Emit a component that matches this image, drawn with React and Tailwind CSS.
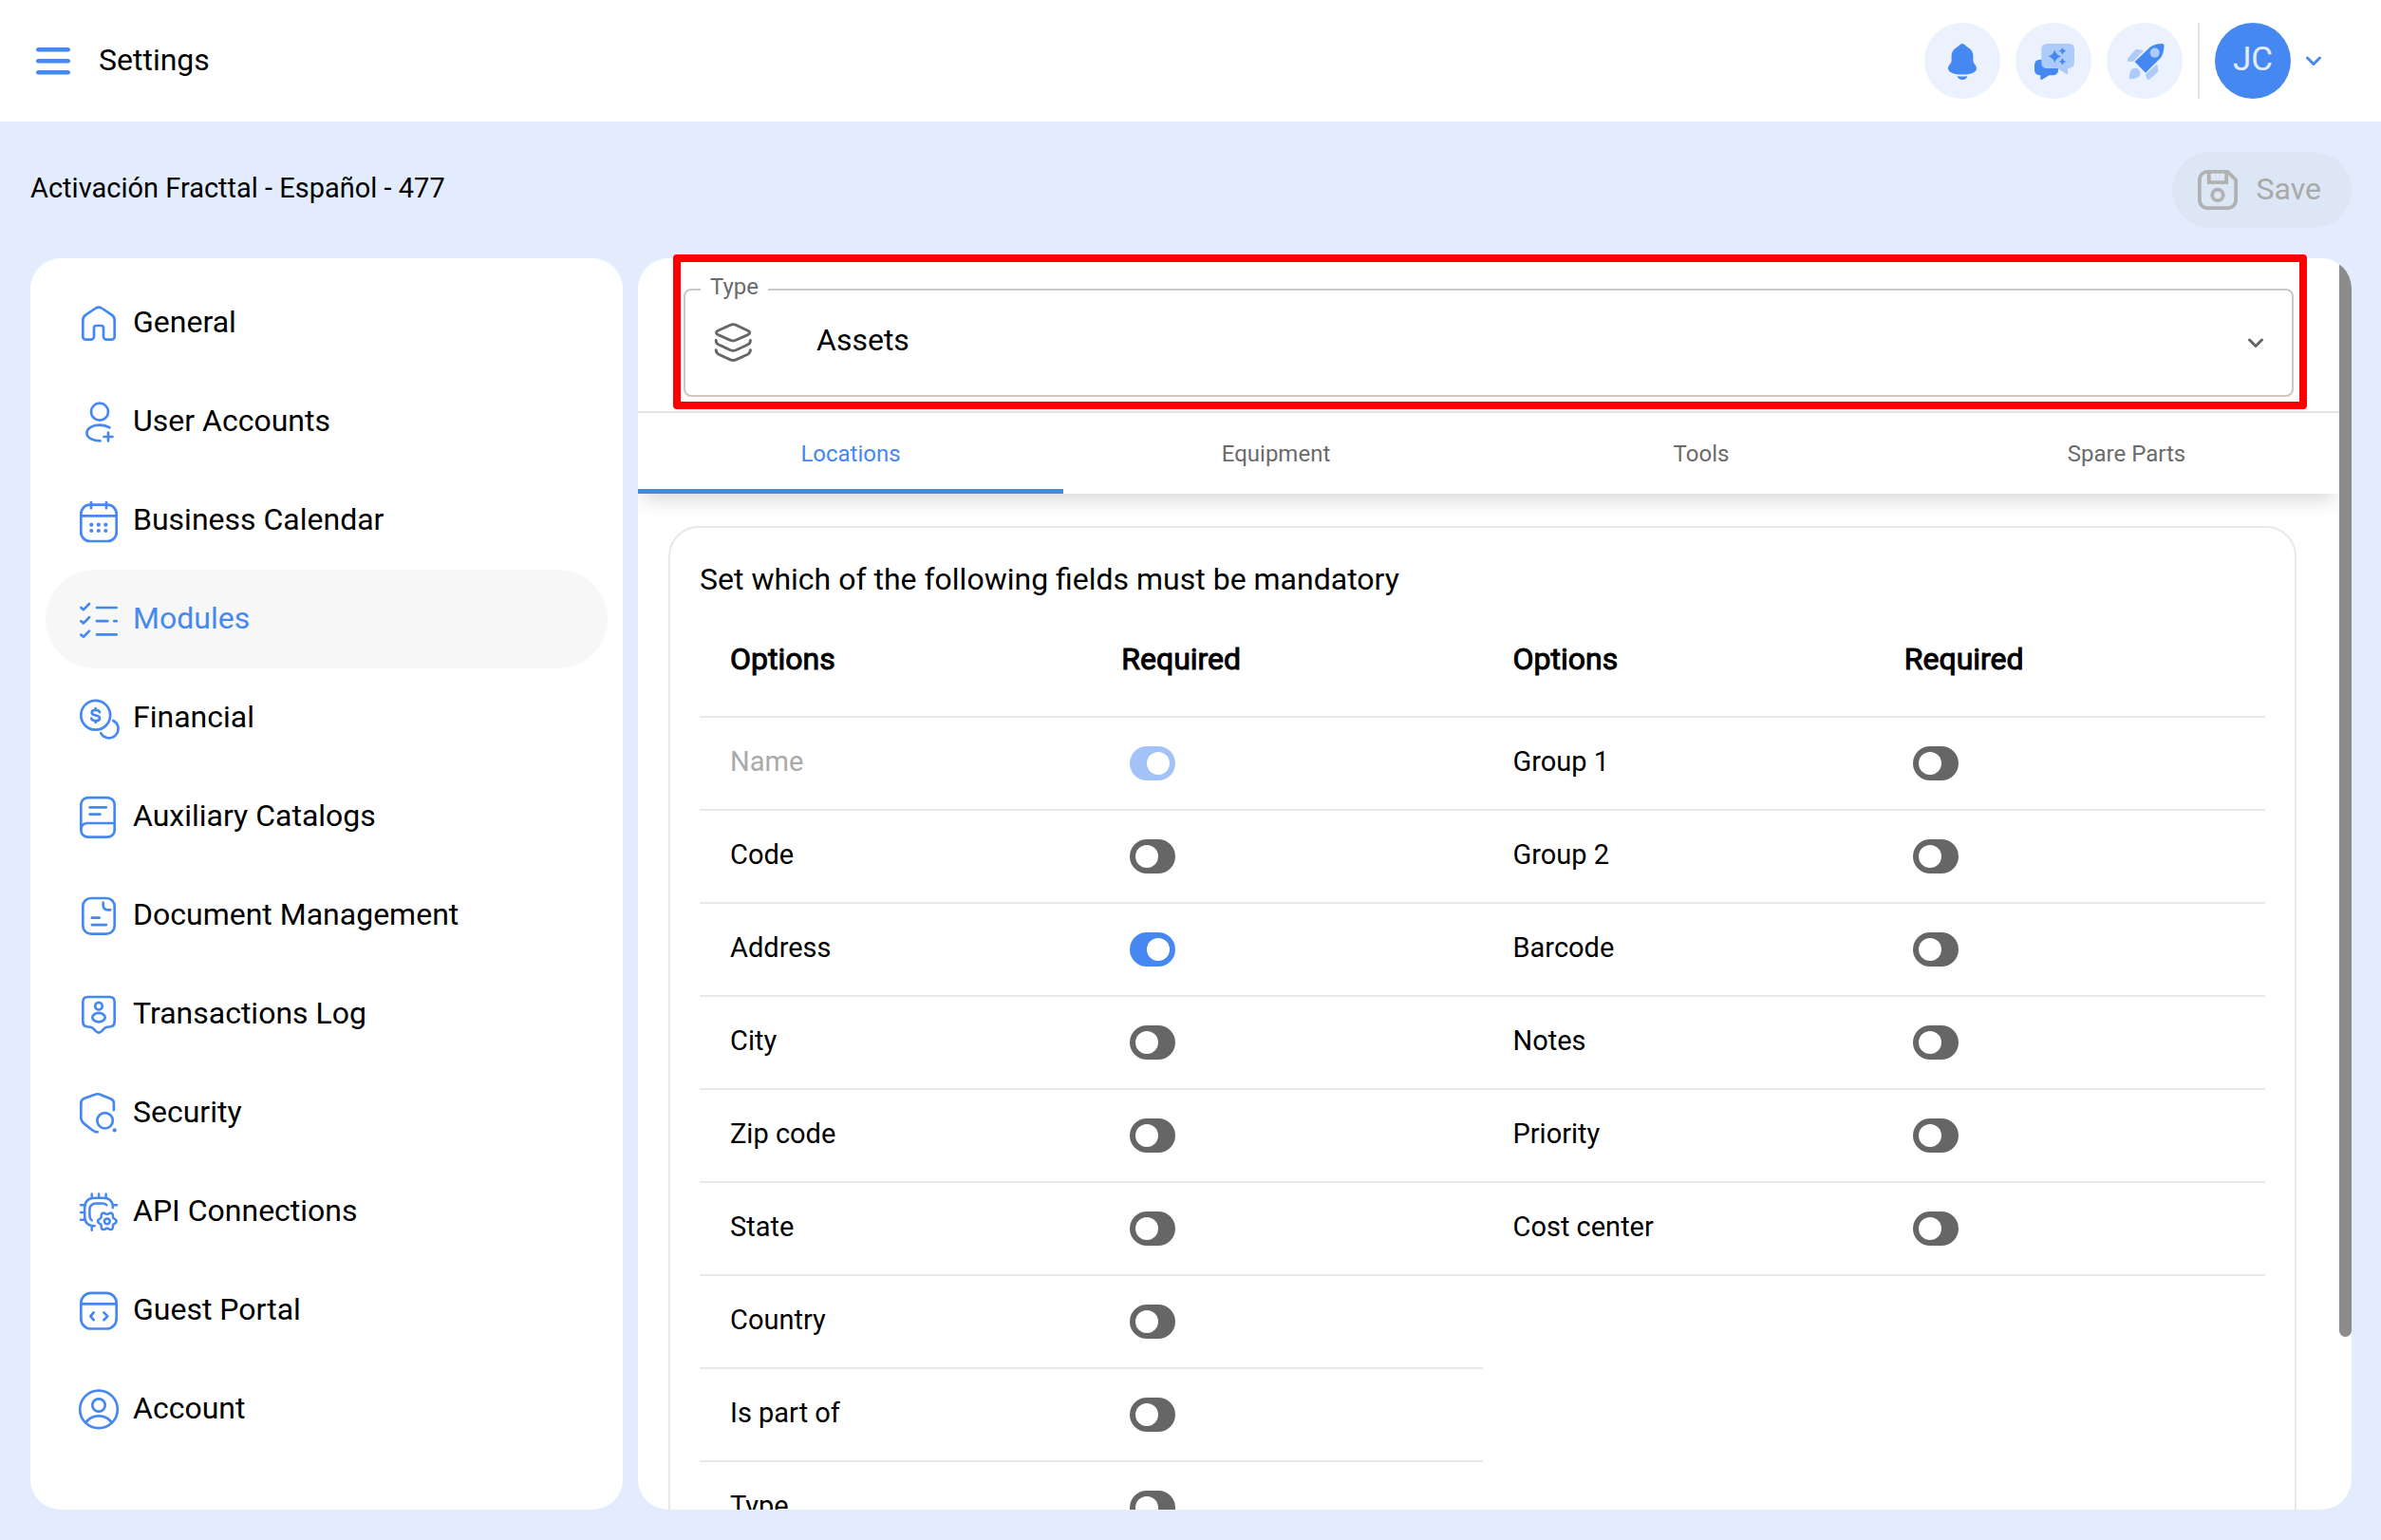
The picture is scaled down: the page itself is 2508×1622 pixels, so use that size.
import { useState } from "react";

const STROKE = {
  fill: "none",
  stroke: "currentColor",
  strokeWidth: 2.7,
  strokeLinecap: "round",
  strokeLinejoin: "round",
};

function gearPath(cx, cy, base, depth, teeth) {
  const steps = 96;
  const points = [];
  for (let i = 0; i < steps; i++) {
    const a = (i / steps) * Math.PI * 2;
    const r = base + depth * Math.cos(teeth * a);
    points.push(`${(cx + r * Math.cos(a)).toFixed(2)} ${(cy + r * Math.sin(a)).toFixed(2)}`);
  }
  return `M${points.join("L")}Z`;
}

const ICONS = {
  home: (
    <path d="M21 8.5 10.3 15.6Q7.3 17.7 7.3 21.2V38.4A3.3 3.3 0 0 0 10.6 41.7H15.7A3.3 3.3 0 0 0 19 38.4V29.3A2.3 2.3 0 0 1 21.3 27H26.7A2.3 2.3 0 0 1 29 29.3V38.4A3.3 3.3 0 0 0 32.3 41.7H37.4A3.3 3.3 0 0 0 40.7 38.4V21.2Q40.7 17.7 37.7 15.6L27 8.5Q24 6.6 21 8.5Z" />
  ),
  user: (
    <>
      <circle cx="25" cy="13.7" r="9" />
      <path d="M35.5 30.4C32 28.2 28 27.6 24.5 27.6 17 27.6 11.4 31.4 11.4 36.2 11.4 41 18 44.4 25.5 44.4M34 35.5V44.5M29.5 40H38.5" />
    </>
  ),
  calendar: (
    <>
      <rect x="5.3" y="7.7" width="37.4" height="38.3" rx="9.5" />
      <path d="M5.3 19.3H42.7M16 5V11.3M32 5V11.3" />
      <g fill="currentColor" stroke="none">
        <circle cx="16.3" cy="28.7" r="2.1" />
        <circle cx="23.8" cy="28.7" r="2.1" />
        <circle cx="31.3" cy="28.7" r="2.1" />
        <circle cx="16.3" cy="35" r="2.1" />
        <circle cx="23.8" cy="35" r="2.1" />
        <circle cx="31.3" cy="35" r="2.1" />
      </g>
    </>
  ),
  checklist: (
    <path d="M5.3 12 8 14.1 14 8M5.3 26.3 8 28.4 14 22.3M5.3 40.6 8 42.7 14 36.6M22 12H42.7M22 26.2H33.3M40.3 26.2H42.7M22 40.4H42.7" />
  ),
  coins: (
    <>
      <circle cx="20.7" cy="21.3" r="15.4" />
      <path d="M25 18.2C24.6 16.4 23 15.8 20.7 15.8 18.3 15.8 16.7 16.8 16.7 18.6 16.7 20.4 18 21.1 20.7 21.5 23.6 21.9 25 22.6 25 24.4 25 26.2 23.2 27.2 20.7 27.2 18.2 27.2 16.6 26.4 16.3 24.6M20.7 14V15.6M20.7 27.4V29" />
      <path d="M39.3 27A9.7 9.7 0 1 1 26.3 40.2" />
    </>
  ),
  book: (
    <>
      <rect x="5.3" y="4.1" width="35.4" height="41.6" rx="7.5" />
      <path d="M14.6 14.4H31.8M14.6 21.7H25.4M40.7 31H12Q5.3 31.3 5.3 38.3" />
    </>
  ),
  document: (
    <>
      <rect x="7.3" y="6" width="33.4" height="37.6" rx="8.5" />
      <path d="M28.7 10.6V13.3Q28.7 18.3 33.7 18.3H36.2M16.8 26.7H24.7M16.8 34.1H31.9" />
    </>
  ),
  badge: (
    <>
      <path d="M12.6 6H35.4Q40.7 6 40.7 11.3V32Q40.7 37.3 35.4 37.5C31.5 37.6 30.5 38.4 27.3 41.9Q24 45.2 20.7 41.9C17.5 38.4 16.5 37.6 12.6 37.5Q7.3 37.3 7.3 32V11.3Q7.3 6 12.6 6Z" />
      <circle cx="24" cy="15.7" r="3.8" />
      <ellipse cx="24" cy="27.6" rx="6.7" ry="4.7" />
    </>
  ),
  shield: (
    <>
      <path d="M39.9 21.2V14Q39.9 10.6 37 9.4L26 4.9Q22.7 3.6 19.4 4.9L9 8.7Q5.3 10.2 5.3 14V28.5Q5.3 33 8.8 35.6L16.5 41.7Q19.5 44.2 22.6 44.3" />
      <circle cx="30.6" cy="32.3" r="8.2" />
      <circle cx="40.7" cy="42.4" r="2.1" fill="currentColor" stroke="none" />
    </>
  ),
  chip: (
    <g strokeWidth="2.5">
      <path d="M38.8 20V17.5Q37.5 9.8 29 9.7H20Q9.2 9.7 9.2 20.5V29Q9.2 39.2 19.7 39.3" />
      <path d="M32.4 17.3Q31 15.4 27.5 15.4H22Q14.4 15.4 14.4 22.5V28Q14.4 31.5 16.7 33.3" />
      <path d="M16.7 5.5V9.7M24.1 5.5V9.7M31.6 5.5V9.7M5 17.3H9M5 25.1H9M5 32.7H9M39 17.3H43M16.7 39.3V43.7" />
      <path d={gearPath(32.8, 34.3, 8.6, 1.2, 6)} />
      <circle cx="32.8" cy="34.3" r="2.9" />
    </g>
  ),
  code: (
    <>
      <rect x="5.3" y="5.9" width="37.4" height="37.6" rx="10.5" />
      <path d="M5.3 17.4H42.7M18.6 26.4 15.3 30.4 18.6 34.2M29.4 26.4 33.3 30.4 29.4 34.2" />
    </>
  ),
  account: (
    <>
      <circle cx="24" cy="24.4" r="19.8" />
      <circle cx="24" cy="20" r="6.7" />
      <path d="M11 37.6C14 33.4 18.5 31.4 24 31.4S34 33.4 37 37.6" />
    </>
  ),
};

const MENU = [
  ["General", "home"],
  ["User Accounts", "user"],
  ["Business Calendar", "calendar"],
  ["Modules", "checklist"],
  ["Financial", "coins"],
  ["Auxiliary Catalogs", "book"],
  ["Document Management", "document"],
  ["Transactions Log", "badge"],
  ["Security", "shield"],
  ["API Connections", "chip"],
  ["Guest Portal", "code"],
  ["Account", "account"],
];

const TABS = ["Locations", "Equipment", "Tools", "Spare Parts"];

const LEFT_FIELDS = [
  { name: "Name", on: true, locked: true },
  { name: "Code" },
  { name: "Address", on: true },
  { name: "City" },
  { name: "Zip code" },
  { name: "State" },
  { name: "Country" },
  { name: "Is part of" },
  { name: "Type" },
];

const RIGHT_FIELDS = [
  { name: "Group 1" },
  { name: "Group 2" },
  { name: "Barcode" },
  { name: "Notes" },
  { name: "Priority" },
  { name: "Cost center" },
];

function Chevron({ className }) {
  return (
    <svg viewBox="0 0 24 24" className={className} {...STROKE} strokeWidth="3" aria-hidden="true">
      <path d="M5.5 9 12 15.5 18.5 9" />
    </svg>
  );
}

function RoundButton({ label, children }) {
  return (
    <button type="button" aria-label={label} className="size-20 rounded-full bg-[#ebf2fe] text-[#4688f1]">
      <svg viewBox="0 0 80 80" className="size-20" fill="currentColor" aria-hidden="true">
        {children}
      </svg>
    </button>
  );
}

function TopBar() {
  return (
    <header className="flex h-32 shrink-0 items-center bg-white pl-8 pr-[59px]">
      <button type="button" aria-label="Menu" className="text-[#4688f1]">
        <svg viewBox="0 0 48 48" className="size-12" fill="currentColor" aria-hidden="true">
          <rect x="6" y="10" width="36" height="4.6" rx="2.3" />
          <rect x="6" y="22" width="36" height="4.6" rx="2.3" />
          <rect x="6" y="34" width="36" height="4.6" rx="2.3" />
        </svg>
      </button>
      <h1 className="ml-6 pb-0.5 text-[32px] leading-10">Settings</h1>
      <div className="ml-auto flex items-center gap-4">
        <RoundButton label="Notifications">
          <path d="M40 22C37.4 22 36.6 24.4 34 26 30.4 28 28.6 31 28.6 35V39.5C28.6 43.2 25 44.6 25 48 25 52.4 32 54.6 40 54.6S55 52.4 55 48C55 44.6 51.4 43.2 51.4 39.5V35C51.4 31 49.6 28 46 26 43.4 24.4 42.6 22 40 22Z" />
          <path d="M34.6 56.2Q40 57 45.4 56.2 44 60 40 60T34.6 56.2Z" />
        </RoundButton>
        <RoundButton label="Assistant">
          <path d="M27 38.7H26Q20 38.7 20 44.7V49.3Q20 54.6 25 55.2H26.3V59Q26.3 60.6 28 59.7L35.5 55.3H39.5Q45 55 45 50V46L36 40Z" />
          <path
            className="text-[#accafa]"
            d="M33.3 22H56Q62 22 62 28V42Q62 47.4 55.2 48V52.8Q55.2 54.6 53.4 53.7L44 48H33.3Q27.3 48 27.3 42V28Q27.3 22 33.3 22Z"
          />
          <path d="M41.3 28.2Q42.6 34 48.4 35.3 42.6 36.6 41.3 42.4 40 36.6 34.2 35.3 40 34 41.3 28.2Z" />
          <path d="M49.4 26Q50.2 29 53.2 29.7 50.2 30.5 49.4 33.4 48.6 30.5 45.8 29.7 48.6 29 49.4 26Z" />
          <path d="M49.4 37.2Q50.2 40 53.2 40.8 50.2 41.6 49.4 44.6 48.6 41.6 45.8 40.8 48.6 40 49.4 37.2Z" />
        </RoundButton>
        <RoundButton label="What's new">
          <g className="text-[#accafa]">
            <path d="M22.2 37.4 30.2 28.6Q31 27.7 32.5 27.9L38.8 29.2 28.5 40.4 23.6 41Q21.2 40.6 22.2 37.4Z" />
            <path d="M53.2 43.6 54.3 50Q54.3 51.6 53.4 52.4L45.4 59.6Q43.4 60.6 42 58.8L41 54Z" />
            <path d="M30 47.8C33 47.8 35.4 50 35.4 53 35.4 57.5 31 59 25 59.2 23.8 59.2 23.6 58.4 23.8 57 24.4 51.5 26 47.8 30 47.8Z" />
          </g>
          <path d="M29.6 41 45.4 26Q50.5 22 58 22 60.6 22 60.5 24.4 60.4 32 56.6 37.3L41 52.8Z" />
          <circle cx="50.7" cy="31.6" r="5" className="text-[#accafa]" />
        </RoundButton>
        <div className="h-20 w-0.5 bg-[#e6e6e6]" />
        <button type="button" className="flex items-center gap-3 text-[#4688f1]">
          <span className="flex size-20 items-center justify-center rounded-full bg-[#4688f1] pb-0.5 text-[35px] text-[#e3ecfd]">
            JC
          </span>
          <Chevron className="size-6" />
        </button>
      </div>
    </header>
  );
}

function Sidebar() {
  return (
    <nav className="w-[624px] shrink-0 rounded-[32px] bg-white p-4">
      {MENU.map(([label, icon]) => (
        <button
          key={label}
          type="button"
          aria-current={label === "Modules" ? "page" : undefined}
          className="flex h-[104px] w-full items-center gap-3 rounded-full px-8 text-left text-[32px] leading-10 aria-[current=page]:bg-[#f7f7f7] aria-[current=page]:text-[#4688f1]"
        >
          <svg viewBox="0 0 48 48" className="size-12 text-[#4688f1]" {...STROKE} aria-hidden="true">
            {ICONS[icon]}
          </svg>
          <span className="pb-0.5">{label}</span>
        </button>
      ))}
    </nav>
  );
}

function Toggle({ label, on, locked }) {
  const [checked, setChecked] = useState(Boolean(on));
  return (
    <input
      type="checkbox"
      role="switch"
      aria-label={label}
      checked={checked}
      disabled={locked}
      onChange={(e) => setChecked(e.target.checked)}
      className="ml-[9px] flex h-9 w-12 appearance-none items-center rounded-full bg-[#666] px-1.5 before:size-6 before:rounded-full before:bg-white checked:justify-end checked:bg-[#4688f1] disabled:bg-[#a3c3f8]"
    />
  );
}

function FieldTable({ fields }) {
  return (
    <table className="w-full table-fixed self-start text-left">
      <thead>
        <tr className="h-[121px] border-b-2 border-[#e8e8e8] text-[32px] [-webkit-text-stroke:1px_black]">
          <th className="pl-8 font-normal">Options</th>
          <th className="pl-8 font-normal">Required</th>
        </tr>
      </thead>
      <tbody>
        {fields.map((f) => (
          <tr key={f.name} className="h-[98px] border-b-2 border-[#e8e8e8] text-[29px]">
            <td className="pb-0.5 pl-8">
              <span className={f.locked ? "text-[#aaa]" : ""}>{f.name}</span>
            </td>
            <td className="pl-8">
              <Toggle label={f.name} on={f.on} locked={f.locked} />
            </td>
          </tr>
        ))}
      </tbody>
    </table>
  );
}

function TypeField() {
  return (
    <div className="px-12 pb-[15px] pt-[18px]">
      <fieldset className="rounded-lg border-2 border-[#c8c8c8] pb-3.5">
        <legend className="ml-4 px-2.5 pb-1.5 text-[24px] leading-6 text-[#6b6b6b]">
          <label htmlFor="type" className="block">
            Type
          </label>
        </legend>
        <div className="flex h-[82px] items-center px-[26px]">
          <svg viewBox="0 0 48 48" className="size-12 shrink-0 text-[#666]" {...STROKE} strokeWidth="2.9" aria-hidden="true">
            <path d="M21.6 5.2 8.3 11.2Q4.6 13.4 8.3 15.6L21.4 21.3Q24.2 22.6 27 21.3L39.8 15.6Q43.6 13.4 39.8 11.2L27 5.2Q24.2 4 21.6 5.2Z" />
            <path d="M6.2 21.4Q6.2 24.6 9 26L21.4 31.7Q24.3 33 27.2 31.7L39.6 26Q42.4 24.6 42.4 21.4" />
            <path d="M6.2 31.6Q6.2 34.8 9 36.2L21.4 41.9Q24.3 43.2 27.2 41.9L39.6 36.2Q42.4 34.8 42.4 31.6" />
          </svg>
          <select id="type" className="h-full flex-1 appearance-none bg-transparent pb-1.5 pl-16 text-[32px] outline-none">
            <option>Assets</option>
          </select>
          <Chevron className="size-6 shrink-0 text-[#666]" />
        </div>
      </fieldset>
    </div>
  );
}

function Tabs() {
  return (
    <div
      role="tablist"
      className="relative grid h-[87px] shrink-0 grid-cols-4 border-t-2 border-[#e6e6e6] bg-white shadow-[0_12px_20px_-6px_rgba(0,0,0,0.16)]"
    >
      {TABS.map((tab, i) => (
        <button
          key={tab}
          type="button"
          role="tab"
          aria-selected={i === 0}
          className="border-b-[5px] border-transparent pt-1.5 text-[24px] leading-6 text-[#6b6b6b] aria-selected:border-[#4688f1] aria-selected:text-[#4688f1]"
        >
          {tab}
        </button>
      ))}
    </div>
  );
}

export default function App() {
  return (
    <div className="flex h-screen flex-col overflow-hidden bg-[#e3ecfd] font-['Roboto',sans-serif] text-black">
      <TopBar />
      <div className="flex h-36 shrink-0 items-center justify-between pl-8 pr-[31px]">
        <h2 className="pb-0.5 text-[29px]">Activación Fracttal - Español - 477</h2>
        <button
          type="button"
          disabled
          className="flex h-20 items-center gap-[17px] rounded-full bg-[#dce6f4] pl-6 pr-8 text-[32px] text-[#a9a9a9]"
        >
          <svg viewBox="0 0 48 48" className="size-12 text-[#b1b1b1]" {...STROKE} strokeWidth="3.8" aria-hidden="true">
            <path d="M12.7 4.9H34.5L43.1 13.5V35.1A8 8 0 0 1 35.1 43.1H12.9A8 8 0 0 1 4.9 35.1V12.9A8 8 0 0 1 12.9 4.9Z" />
            <path d="M14.8 5V16.1H33.2V5" strokeLinejoin="miter" />
            <circle cx="24" cy="29.4" r="5.8" />
          </svg>
          <span className="pb-0.5">Save</span>
        </button>
      </div>
      <div className="flex min-h-0 flex-1 gap-4 pb-8 pl-8 pr-[31px]">
        <Sidebar />
        <main className="relative min-w-0 flex-1">
          <div className="flex h-full overflow-hidden rounded-[32px] bg-white">
            <div className="flex min-w-0 flex-1 flex-col overflow-hidden">
              <TypeField />
              <Tabs />
              <section className="ml-8 mr-[45px] mt-[34px] shrink-0 rounded-[32px] border-2 border-[#e8e8e8] px-[31px] pb-8 pt-[30px]">
                <h3 className="text-[32px] leading-[48px]">Set which of the following fields must be mandatory</h3>
                <div className="grid grid-cols-2">
                  <FieldTable fields={LEFT_FIELDS} />
                  <FieldTable fields={RIGHT_FIELDS} />
                </div>
              </section>
            </div>
            <div className="w-[13px] shrink-0">
              <div className="h-[86.2%] rounded-b-full bg-[#8c8c8c]" />
            </div>
          </div>
          <div className="pointer-events-none absolute -top-1 left-[37px] right-[47px] h-[163px] rounded border-8 border-[#ff0000]" />
        </main>
      </div>
    </div>
  );
}
